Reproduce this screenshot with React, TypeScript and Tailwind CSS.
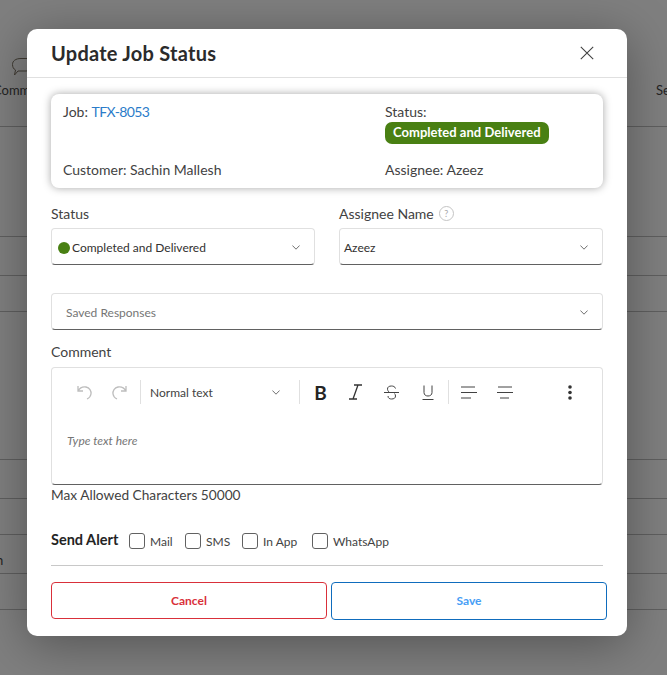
import React from "react";

const Chevron = () => (
  <svg width="8" height="5" viewBox="0 0 8 5" fill="none" stroke="#707070" strokeWidth="1"><path d="M0.4 0.5 L4 4.2 L7.6 0.5" /></svg>
);

const Select = ({ children, className = "" }: { children: React.ReactNode; className?: string }) => (
  <div className={`flex h-[37px] items-center justify-between rounded border border-[#e0e0e0] border-b-[#616161] pr-[14px] pt-[2px] text-[12px] text-[#323130] ${className}`}>
    {children}
    <Chevron />
  </div>
);

const Check = ({ label, className = "" }: { label: string; className?: string }) => (
  <div className={`flex items-center gap-[5px] ${className}`}>
    <span className="h-4 w-4 rounded-[3px] border border-[#616161] bg-white" />
    <span className="mt-[2px] text-[12px] text-[#424242]">{label}</span>
  </div>
);

const Sep = ({ className = "" }: { className?: string }) => <span className={`h-6 w-px bg-[#e0e0e0] ${className}`} />;

const Row = ({ h }: { h: string }) => <div className={`${h} border-b border-[#5f5f5f]`} />;

export default function App() {
  return (
    <div className="relative h-[675px] w-[667px] overflow-hidden bg-[#7f7f7f] font-['Lato',sans-serif]">
      <div className="relative h-[127px] border-b border-[#5f5f5f] text-[13px] text-[#242424]">
        <svg className="absolute left-[12px] top-[57px]" width="20" height="20" viewBox="0 0 20 20" fill="none" stroke="#3f3a32" strokeWidth="1">
          <path d="M9 1.5 H17 C 19 1.5 20 4 20 7 C 20 11 18 14 14 14 H6 L2.5 18 L3.5 13 C1.5 12 0.5 10 0.5 7.5 C0.5 4 3.5 1.5 9 1.5 Z" />
        </svg>
        <span className="absolute left-[-7px] top-[81px]">Comm</span>
        <span className="absolute left-[656px] top-[81px]">Se</span>
      </div>
      <Row h="h-[110px]" />
      <Row h="h-[39px]" />
      <Row h="h-[36px]" />
      <Row h="h-[148px]" />
      <Row h="h-[39px]" />
      <Row h="h-[36px]" />
      <div className="relative h-[39px] border-b border-[#5f5f5f] text-[13px] text-[#242424]">
        <span className="absolute left-[-4px] top-[16px]">n</span>
      </div>
      <Row h="h-[36px]" />

      <div className="absolute inset-0 flex items-start justify-start pl-[27px] pt-[29px]">
        <div className="flex h-[607px] w-[600px] flex-col rounded-[10px] bg-white shadow-[0_8px_50px_rgba(0,0,0,0.35)]">
          <div className="flex h-[49px] shrink-0 items-center justify-between border-b border-[#e0e0e0] pl-6 pr-[33px]">
            <h1 className="text-[20px] font-bold tracking-[0.25px] text-[#2b2b2b]">Update Job Status</h1>
            <svg width="14" height="14" viewBox="0 0 14 14" stroke="#424242" strokeWidth="1.1"><path d="M0.8 0.8 L13.2 13.2 M13.2 0.8 L0.8 13.2" /></svg>
          </div>

          <div className="flex flex-1 flex-col pl-6 pr-6 pt-4">
            <div className="grid h-[94px] shrink-0 grid-cols-[322px_1fr] rounded-lg bg-white pl-3 pt-[8px] text-[14px] text-[#424242] shadow-[0_0_8px_rgba(0,0,0,0.35)]">
              <div className="flex flex-col justify-between pb-[8px]">
                <div className="leading-[20px]">Job: <span className="tracking-[-0.6px] text-[#2b7cc9]">TFX-8053</span></div>
                <div className="leading-[20px]">Customer: Sachin Mallesh</div>
              </div>
              <div className="flex flex-col justify-between pb-[8px]">
                <div>
                  <div className="mb-[-1px] leading-[20px]">Status:</div>
                  <span className="inline-block rounded-[7px] bg-[#498013] px-2 pb-px text-[13px] font-bold leading-[21px] tracking-[0.03px] text-white">Completed and Delivered</span>
                </div>
                <div className="leading-[20px]">Assignee: Azeez</div>
              </div>
            </div>

            <div className="mt-[15px] grid shrink-0 grid-cols-[264px_264px] gap-x-6">
              <div>
                <div className="mb-[4px] text-[14px] leading-[21px] text-[#424242]">Status</div>
                <Select className="pl-[6px]">
                  <span className="flex items-center gap-[2px]">
                    <span className="h-3 w-3 rounded-full bg-[#498013]" />
                    Completed and Delivered
                  </span>
                </Select>
              </div>
              <div>
                <div className="mb-[4px] flex items-center gap-[5px] text-[14px] leading-[21px] text-[#424242]">
                  Assignee Name
                  <span className="flex h-[15px] w-[15px] items-center justify-center rounded-full border border-[#c4c4c4] text-[9px] text-[#a8a8a8]">?</span>
                </div>
                <Select className="pl-[4px]">Azeez</Select>
              </div>
            </div>

            <Select className="mt-7 shrink-0 pl-[14px] text-[#757575]">Saved Responses</Select>

            <div className="mt-[11px] text-[14px] leading-[21px] text-[#424242]">Comment</div>
            <div className="mt-[5px] h-[118px] shrink-0 rounded border border-[#e0e0e0] border-b-[#616161]">
              <div className="flex h-[48px] items-center text-[#424242]">
                <svg className="ml-[25px]" width="16" height="16" viewBox="0 0 16 16" fill="none" stroke="#bdbdbd" strokeWidth="1.3"><path d="M1 2 V7 H6 M1 7 C3 3.5 6 2.5 9 3 C12.5 3.7 14.5 7 14 10 C13.6 12.5 12.3 14 10 15" /></svg>
                <svg className="ml-[18px]" width="16" height="16" viewBox="0 0 16 16" fill="none" stroke="#bdbdbd" strokeWidth="1.3"><path d="M15 2 V7 H10 M15 7 C13 3.5 10 2.5 7 3 C3.5 3.7 1.5 7 2 10 C2.4 12.5 3.7 14 6 15" /></svg>
                <Sep className="ml-[13px]" />
                <span className="ml-[9px] mt-[2px] w-[122px] text-[12px]">Normal text</span>
                <Chevron />
                <Sep className="ml-[19px]" />
                <span className="ml-[12px] w-[17px] text-center text-[19px] font-bold leading-none text-[#242424]">B</span>
                <svg className="ml-[19px]" width="15" height="16" viewBox="0 0 15 16" fill="none" stroke="#333" strokeWidth="1.3"><path d="M6 1 H14 M1 15 H9 M10 1 L5 15" /></svg>
                <svg className="ml-[21px]" width="15" height="15" viewBox="0 0 15 15" fill="none" stroke="#424242" strokeWidth="1"><path d="M0 7.5 H15 M11.5 3.5 C11 1.5 9 1 7.5 1 C5 1 3.5 2 3.5 4 C3.5 5 4 6 5 7 M4 11 C4 13.5 6 14 7.5 14 C10 14 11.5 13 11.5 11 C11.5 10 11 9 10.5 8.5" /></svg>
                <svg className="ml-[23px]" width="12" height="15" viewBox="0 0 12 15" fill="none" stroke="#424242" strokeWidth="1"><path d="M2 0.5 V7.5 C2 10 4 11 6 11 C8 11 10 10 10 7.5 V0.5 M0.5 14.5 H11.5" /></svg>
                <Sep className="ml-[14px]" />
                <svg className="ml-[12px]" width="16" height="13" viewBox="0 0 16 13" stroke="#424242" strokeWidth="1"><path d="M0 1 H14 M0 6.5 H16 M0 12 H10" /></svg>
                <svg className="ml-[20px]" width="16" height="13" viewBox="0 0 16 13" stroke="#424242" strokeWidth="1"><path d="M1 1 H15 M0 6.5 H16 M3 12 H12" /></svg>
                <svg className="ml-[55px]" width="4" height="15" viewBox="0 0 4 15" fill="#333"><circle cx="2" cy="2" r="1.8" /><circle cx="2" cy="7.5" r="1.8" /><circle cx="2" cy="13" r="1.8" /></svg>
              </div>
              <div className="pl-[15px] pt-[16px] text-[12px] italic text-[#757575]">Type text here</div>
            </div>
            <div className="text-[13.7px] leading-[20px] text-[#424242]">Max Allowed Characters 50000</div>

            <div className="mt-[26px] flex items-center">
              <span className="mt-[-3px] w-[78px] text-[14.5px] font-bold text-[#242424]">Send Alert</span>
              <Check label="Mail" className="w-[56px]" />
              <Check label="SMS" className="w-[57px]" />
              <Check label="In App" className="w-[70px]" />
              <Check label="WhatsApp" />
            </div>
            <div className="mt-[14px] h-px shrink-0 bg-[#c8c8c8]" />

            <div className="mt-4 flex w-[556px] gap-1 text-[12px] font-bold">
              <div className="flex h-[37px] w-[276px] items-center justify-center rounded border border-[#d9303a] text-[#d9303a]">Cancel</div>
              <div className="flex h-[38px] w-[276px] items-center justify-center rounded border border-[#0f6cbd] text-[#479ef5]">Save</div>
            </div>
          </div>
        </div>
      </div>
    </div>
  );
}
